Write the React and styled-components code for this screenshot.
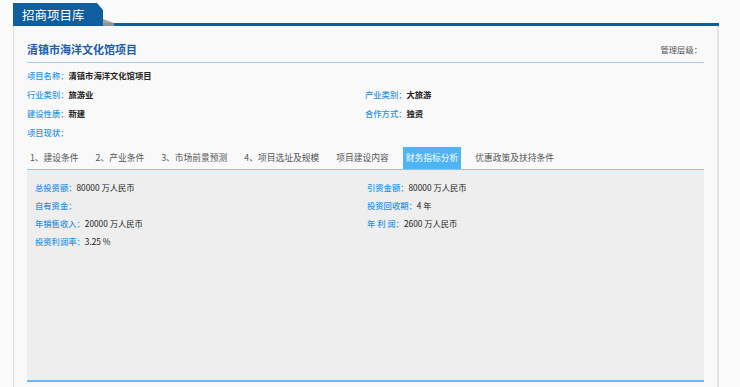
import React from "react";
import styled, { createGlobalStyle } from "styled-components";

const GlobalStyle = createGlobalStyle`
  html, body {
    margin: 0;
    padding: 0;
    background: #fbfbfb;
    font-family: "Noto Sans CJK SC", "Microsoft YaHei", sans-serif;
  }
`;

const Page = styled.div`
  width: 706px;
  margin-left: 13px;
  height: 387px;
  display: flex;
  flex-direction: column;
  overflow: hidden;
`;

const Header = styled.div`
  position: relative;
  height: 20px;
  padding-top: 3px;
  border-bottom: 3px solid #0f5e9e;
  display: flex;
  align-items: flex-end;
`;

const HeaderTab = styled.div`
  width: 90px;
  height: 23px;
  margin-bottom: -3px;
  box-sizing: border-box;
  padding-left: 9px;
  background: #0f5e9e;
  color: #fff;
  font-size: 12.5px;
  line-height: 23px;
  clip-path: polygon(0 0, 84px 0, 90px 7px, 90px 100%, 0 100%);
`;

const Fold = styled.span`
  position: absolute;
  left: 90px;
  bottom: -3px;
  width: 0;
  height: 0;
  border-top: 4px solid transparent;
  border-left: 11px solid #9a9a9a;
  border-bottom: 3px solid #9a9a9a;
  opacity: 0.9;
`;

const Body = styled.div`
  flex: 1;
  background: #f9f9f9;
  border-left: 1px solid #dedede;
  border-right: 2px solid #e4e4e4;
  padding: 0 13px;
`;

const TitleRow = styled.div`
  display: flex;
  justify-content: space-between;
  align-items: center;
  padding: 16px 0 6px;
  border-bottom: 1px solid #a9cbec;
`;

const Title = styled.h1`
  margin: 0;
  font-size: 11px;
  line-height: 14px;
  font-weight: bold;
  color: #1d5ea6;
`;

const Manage = styled.span`
  font-size: 8.3px;
  color: #555;
  margin-right: 2px;
`;

const InfoGrid = styled.div`
  display: grid;
  grid-template-columns: 338px 1fr;
  margin-top: 3px;
`;

const Field = styled.div`
  grid-column: ${(p) => (p.$full ? "1 / span 2" : "auto")};
  font-size: 8.3px;
  line-height: ${(p) => p.$lh || 19}px;
  white-space: nowrap;
`;

const Label = styled.span`
  color: #2f93e3;
  font-weight: 500;
`;

const Value = styled.span`
  color: #222;
  font-weight: ${(p) => (p.$bold ? "bold" : "normal")};
`;

const Tabs = styled.div`
  display: flex;
  gap: 11px;
  margin-top: 5px;
  border-bottom: 1px solid #8ec4f0;
`;

const Tab = styled.div`
  padding: 0 3px;
  height: 22px;
  line-height: 22px;
  font-size: 8.75px;
  white-space: nowrap;
  color: ${(p) => (p.$active ? "#fff" : "#555")};
  background: ${(p) => (p.$active ? "#4db4f5" : "transparent")};
`;

const Panel = styled.div`
  height: 202px;
  padding: 8px 8px 0;
  background: #eeeeee;
  border-bottom: 2px solid #66baf0;
  display: grid;
  grid-template-columns: 332px 1fr;
  align-content: start;
`;

const info = [
  { label: "项目名称：", value: "清镇市海洋文化馆项目", full: true },
  { label: "行业类别：", value: "旅游业" },
  { label: "产业类别：", value: "大旅游" },
  { label: "建设性质：", value: "新建" },
  { label: "合作方式：", value: "独资" },
  { label: "项目现状：", value: "", full: true },
];

const tabs = [
  "1、建设条件",
  "2、产业条件",
  "3、市场前景预测",
  "4、项目选址及规模",
  "项目建设内容",
  "财务指标分析",
  "优惠政策及扶持条件",
];

const finance = [
  { label: "总投资额：", value: "80000 万人民币" },
  { label: "引资金额：", value: "80000 万人民币" },
  { label: "自有资金：", value: "" },
  { label: "投资回收期：", value: "4 年" },
  { label: "年销售收入：", value: "20000 万人民币" },
  { label: "年 利 润：", value: "2600 万人民币" },
  { label: "投资利润率：", value: "3.25 %", full: true },
];

export default function App() {
  return (
    <>
      <GlobalStyle />
      <Page>
        <Header>
          <HeaderTab>招商项目库</HeaderTab>
          <Fold />
        </Header>
        <Body>
          <TitleRow>
            <Title>清镇市海洋文化馆项目</Title>
            <Manage>管理层级：</Manage>
          </TitleRow>
          <InfoGrid>
            {info.map((f) => (
              <Field key={f.label} $full={f.full}>
                <Label>{f.label}</Label>
                <Value $bold>{f.value}</Value>
              </Field>
            ))}
          </InfoGrid>
          <Tabs>
            {tabs.map((t) => (
              <Tab key={t} $active={t === "财务指标分析"}>
                {t}
              </Tab>
            ))}
          </Tabs>
          <Panel>
            {finance.map((f) => (
              <Field key={f.label} $full={f.full} $lh={18}>
                <Label>{f.label}</Label>
                <Value>{f.value}</Value>
              </Field>
            ))}
          </Panel>
        </Body>
      </Page>
    </>
  );
}
